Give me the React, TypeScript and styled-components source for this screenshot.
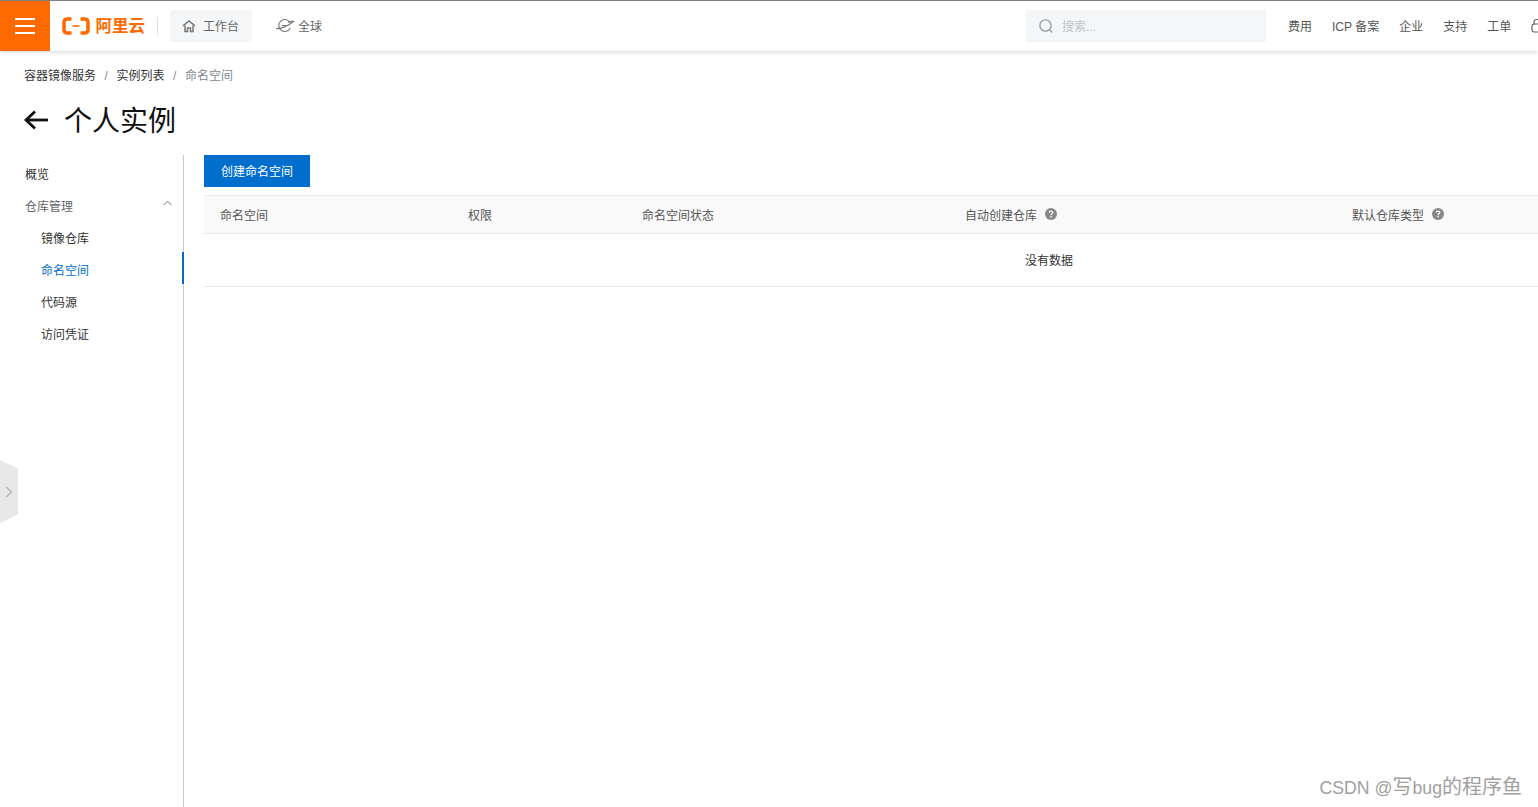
import React from 'react';
import styled, { createGlobalStyle } from 'styled-components';

const BASE_FONT = `"Liberation Sans", "Noto Sans CJK SC", sans-serif`;
const ORANGE = '#ff6a00';
const BLUE = '#006ecc';

const GlobalStyle = createGlobalStyle`
  html, body {
    margin: 0;
    padding: 0;
    background: #fff;
    overflow: hidden;
  }
  body {
    font-family: ${BASE_FONT};
    font-size: 12px;
    color: #333;
  }
  * { box-sizing: border-box; }
`;

const S = {
  Page: styled.div`
    position: relative;
    width: 1538px;
    height: 807px;
    overflow: hidden;
    display: flex;
    flex-direction: column;
  `,
  TopBar: styled.header`
    flex: none;
    display: flex;
    align-items: center;
    width: 1538px;
    height: 51px;
    border-top: 1px solid #808080;
    background: #fff;
    box-shadow: 0 1px 4px rgba(0, 0, 0, 0.18);
    overflow: hidden;
  `,
  MenuButton: styled.div`
    flex: none;
    width: 50px;
    height: 50px;
    background: ${ORANGE};
    display: flex;
    flex-direction: column;
    justify-content: center;
    align-items: center;
    gap: 5px;
  `,
  MenuLine: styled.span`
    display: block;
    width: 20px;
    height: 2px;
    background: #fff;
  `,
  Logo: styled.div`
    flex: none;
    display: flex;
    align-items: center;
    gap: 5.5px;
    margin-left: 12px;
    color: ${ORANGE};
    font-size: 16.5px;
    font-weight: 700;
    line-height: 20px;
  `,
  Divider: styled.span`
    flex: none;
    width: 1px;
    height: 18px;
    margin: 0 12px;
    background: #dcdfe3;
  `,
  Workbench: styled.div`
    flex: none;
    display: flex;
    align-items: center;
    gap: 7px;
    width: 82px;
    height: 32px;
    padding-left: 12px;
    background: #f5f6f7;
    border-radius: 2px;
    color: #666;
    font-size: 12px;
  `,
  Region: styled.div`
    flex: none;
    display: flex;
    align-items: center;
    gap: 3px;
    margin-left: 23px;
    color: #666;
    font-size: 12px;
  `,
  SearchBox: styled.div`
    flex: none;
    display: flex;
    align-items: center;
    gap: 8px;
    width: 240px;
    height: 32px;
    margin-left: 704px;
    padding-left: 12px;
    background: #f5f6f7;
    color: #c0c4c8;
    font-size: 12px;
  `,
  NavList: styled.nav`
    flex: none;
    display: flex;
    align-items: center;
    gap: 20px;
    margin-left: 22px;
    color: #555;
    font-size: 12px;
    white-space: nowrap;
  `,
  BarText: styled.span`
    margin-bottom: 2px;
  `,
  Breadcrumb: styled.div`
    flex: none;
    display: flex;
    align-items: center;
    height: 16px;
    margin: 17px 0 0 24px;
    font-size: 12px;
    line-height: 16px;
  `,
  Crumb: styled.span<{ $current?: boolean }>`
    color: ${(p) => (p.$current ? '#808890' : '#333')};
  `,
  CrumbSlash: styled.span`
    width: 20.5px;
    text-align: center;
    color: #888;
  `,
  TitleRow: styled.div`
    flex: none;
    display: flex;
    align-items: center;
    gap: 15px;
    height: 40px;
    margin: 16px 0 15px 24px;
    color: #111;
    font-size: 28px;
    line-height: 40px;
  `,
  TitleText: styled.span`
    padding-top: 4px;
  `,
  Body: styled.div`
    flex: 1;
    min-height: 0;
    display: flex;
  `,
  Sidebar: styled.aside`
    flex: none;
    width: 184px;
    padding-top: 1px;
    border-right: 1px solid #c9c9c9;
  `,
  SideItem: styled.div<{ $sub?: boolean; $active?: boolean; $muted?: boolean }>`
    display: flex;
    align-items: center;
    justify-content: space-between;
    height: 32px;
    padding: 2px 10px 0 ${(p) => (p.$sub ? '41px' : '25px')};
    margin-right: -1px;
    font-size: 12px;
    color: ${(p) => (p.$active ? BLUE : p.$muted ? '#666' : '#333')};
    border-right: 2px solid ${(p) => (p.$active ? BLUE : 'transparent')};
  `,
  Content: styled.main`
    flex: none;
    width: 1690px;
    margin-left: 20px;
  `,
  CreateButton: styled.div`
    display: flex;
    align-items: center;
    justify-content: center;
    width: 106px;
    height: 32px;
    padding-bottom: 1px;
    background: ${BLUE};
    color: #fff;
    font-size: 12px;
  `,
  Table: styled.div`
    margin-top: 8px;
  `,
  HeadRow: styled.div`
    display: grid;
    grid-template-columns: 248px 174px 323px 387px 1fr;
    align-items: center;
    height: 39px;
    background: #f9f9f9;
    border-top: 1px solid #e8e8e8;
    border-bottom: 1px solid #e8e8e8;
  `,
  HeadCell: styled.div`
    display: flex;
    align-items: center;
    gap: 8px;
    padding-left: 16px;
    color: #555;
    font-size: 12px;
  `,
  HelpMark: styled.svg`
    width: 12px;
    height: 12px;
    margin-bottom: 2px;
  `,
  EmptyRow: styled.div`
    display: flex;
    align-items: center;
    justify-content: center;
    height: 53px;
    padding-bottom: 1px;
    border-bottom: 1px solid #e8e8e8;
    color: #333;
    font-size: 12px;
  `,
  ExpandTab: styled.div`
    position: absolute;
    left: 0;
    top: 460px;
    width: 18px;
    height: 63px;
    padding-left: 5px;
    display: flex;
    align-items: center;
    background: #e8e8e8;
    clip-path: polygon(0 0, 100% 14%, 100% 86%, 0 100%);
  `,
  Watermark: styled.div`
    position: absolute;
    right: 16px;
    bottom: 5px;
    color: #a0a0a0;
    font-size: 20px;
    line-height: 28px;
    white-space: nowrap;
  `,
  WatermarkLatin: styled.span`
    font-size: 17.7px;
  `
};

const LogoMark = () => (
  <svg width="28" height="18" viewBox="0 0 28 18" fill="none">
    <path
      d="M9.5 2H5.5C3.2 2 2 3.2 2 5.5V12.5C2 14.8 3.2 16 5.5 16H9.5M18.5 2H22.5C24.8 2 26 3.2 26 5.5V12.5C26 14.8 24.8 16 22.5 16H18.5"
      stroke={ORANGE}
      strokeWidth="3.6"
    />
    <path d="M10.5 9H17.5" stroke={ORANGE} strokeWidth="1.6" />
  </svg>
);

const HomeIcon = () => (
  <svg width="14" height="14" viewBox="0 0 14 14" fill="none" stroke="#777" strokeWidth="1.5">
    <path d="M1 6.8L7 2L13 6.8" />
    <path d="M3 6.5V12.5H5.5V9H8.5V12.5H11V6.5" />
  </svg>
);

const GlobeIcon = () => (
  <svg width="20" height="16" viewBox="0 0 20 16" fill="none" stroke="#777" strokeWidth="1.1">
    <path d="M14.8 4.2A6 6 0 1 0 15.2 10" />
    <path d="M1 10.5C5 11 12 8.5 18.5 3.5C16 3.2 14.5 3.6 13 4.5" />
    <path d="M7 7.5H11" />
  </svg>
);

const SearchIcon = () => (
  <svg width="16" height="16" viewBox="0 0 16 16" fill="none" stroke="#9a9ea3" strokeWidth="1.4">
    <circle cx="7.5" cy="7.5" r="5.6" />
    <path d="M11.5 11.5L14 14.5" />
  </svg>
);

const ConsoleIcon = () => (
  <svg width="14" height="16" viewBox="0 0 14 16" fill="none" stroke="#666" strokeWidth="1.2">
    <path d="M3 7V4C3 2.5 4 1.5 6 1.5H8C10 1.5 11 2.5 11 4V7" />
    <rect x="1" y="6" width="12" height="8" rx="2" />
  </svg>
);

const BackArrow = () => (
  <svg width="25" height="20" viewBox="0 0 25 20" fill="none" stroke="#111" strokeWidth="2.8">
    <path d="M24 10H2" />
    <path d="M11 1.5L2 10L11 18.5" />
  </svg>
);

const HelpIcon = () => (
  <S.HelpMark viewBox="0 0 12 12">
    <circle cx="6" cy="6" r="6" fill="#888" />
    <path d="M4.3 4.6C4.3 2.6 7.8 2.6 7.8 4.5C7.8 5.7 6 5.7 6 7.2" fill="none" stroke="#fff" strokeWidth="1.3" />
    <rect x="5.3" y="8" width="1.4" height="1.4" fill="#fff" />
  </S.HelpMark>
);

const ChevronUp = () => (
  <svg width="9" height="6" viewBox="0 0 9 6" fill="none" stroke="#777" strokeWidth="1" style={{ marginBottom: 4 }}>
    <path d="M0.7 5L4.5 1L8.3 5" />
  </svg>
);

const ChevronRight = () => (
  <svg width="8" height="12" viewBox="0 0 8 12" fill="none" stroke="#b4b8bc" strokeWidth="1.6">
    <path d="M1 1L6.5 6L1 11" />
  </svg>
);

const NAV_LINKS = ['费用', 'ICP 备案', '企业', '支持', '工单'];
const SUB_ITEMS = ['镜像仓库', '命名空间', '代码源', '访问凭证'];

const App = () => {
  return (
    <S.Page>
      <GlobalStyle />
      <S.TopBar>
        <S.MenuButton>
          <S.MenuLine />
          <S.MenuLine />
          <S.MenuLine />
        </S.MenuButton>
        <S.Logo>
          <LogoMark />
          阿里云
        </S.Logo>
        <S.Divider />
        <S.Workbench>
          <HomeIcon />
          <S.BarText>工作台</S.BarText>
        </S.Workbench>
        <S.Region>
          <GlobeIcon />
          <S.BarText>全球</S.BarText>
        </S.Region>
        <S.SearchBox>
          <SearchIcon />
          <S.BarText>搜索...</S.BarText>
        </S.SearchBox>
        <S.NavList>
          {NAV_LINKS.map((link) => (
            <S.BarText key={link}>{link}</S.BarText>
          ))}
          <ConsoleIcon />
        </S.NavList>
      </S.TopBar>

      <S.Breadcrumb>
        <S.Crumb>容器镜像服务</S.Crumb>
        <S.CrumbSlash>/</S.CrumbSlash>
        <S.Crumb>实例列表</S.Crumb>
        <S.CrumbSlash>/</S.CrumbSlash>
        <S.Crumb $current>命名空间</S.Crumb>
      </S.Breadcrumb>

      <S.TitleRow>
        <BackArrow />
        <S.TitleText>个人实例</S.TitleText>
      </S.TitleRow>

      <S.Body>
        <S.Sidebar>
          <S.SideItem>概览</S.SideItem>
          <S.SideItem $muted>
            仓库管理
            <ChevronUp />
          </S.SideItem>
          {SUB_ITEMS.map((item) => (
            <S.SideItem key={item} $sub $active={item === '命名空间'}>
              {item}
            </S.SideItem>
          ))}
        </S.Sidebar>

        <S.Content>
          <S.CreateButton>创建命名空间</S.CreateButton>
          <S.Table>
            <S.HeadRow>
              <S.HeadCell>命名空间</S.HeadCell>
              <S.HeadCell>权限</S.HeadCell>
              <S.HeadCell>命名空间状态</S.HeadCell>
              <S.HeadCell>
                自动创建仓库
                <HelpIcon />
              </S.HeadCell>
              <S.HeadCell>
                默认仓库类型
                <HelpIcon />
              </S.HeadCell>
            </S.HeadRow>
            <S.EmptyRow>没有数据</S.EmptyRow>
          </S.Table>
        </S.Content>
      </S.Body>

      <S.ExpandTab>
        <ChevronRight />
      </S.ExpandTab>
      <S.Watermark>
        <S.WatermarkLatin>CSDN @</S.WatermarkLatin>写<S.WatermarkLatin>bug</S.WatermarkLatin>的程序鱼
      </S.Watermark>
    </S.Page>
  );
};

export default App;
